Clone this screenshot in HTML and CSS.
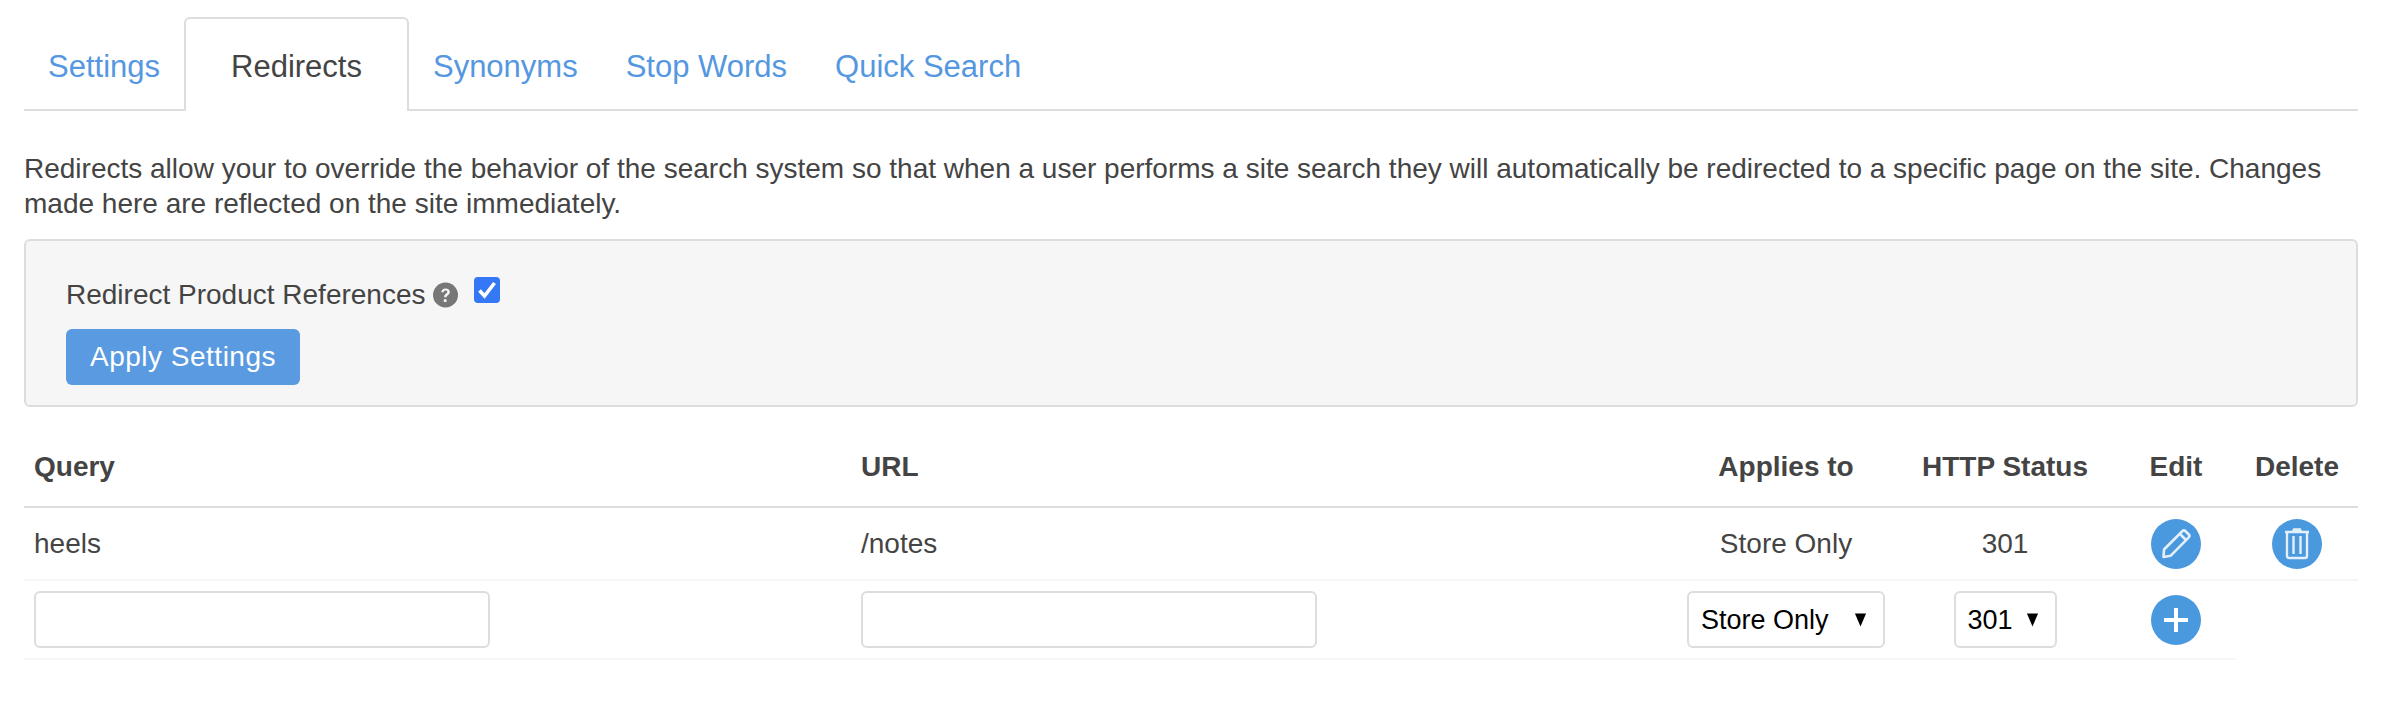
FILE: index.html
```html
<!DOCTYPE html>
<html lang="en">
<head>
    <meta charset="UTF-8">
    <title>Redirects</title>
    <link rel="stylesheet" href="styles.css">
</head>
<body>
    <ul class="tabs">
        <li><a href="#">Settings</a></li>
        <li class="active"><a href="#">Redirects</a></li>
        <li><a href="#">Synonyms</a></li>
        <li><a href="#">Stop Words</a></li>
        <li><a href="#">Quick Search</a></li>
    </ul>
    <p class="intro">Redirects allow your to override the behavior of the search system so that when a user performs a site search they will automatically be redirected to a specific page on the site. Changes made here are reflected on the site immediately.</p>
    <form class="panel">
        <div class="panel-row">
            <label for="refs">Redirect Product References</label>
            <svg class="help" viewBox="0 0 26 26">
                <circle cx="13" cy="13" r="13" fill="#777"/>
                <path d="M8.6 10.2c.2-2.6 2-4 4.500-4 2.600 0 4.400 1.500 4.400 3.700 0 1.600-.9 2.500-2.100 3.300-1 .7-1.300 1.100-1.300 2.100h-2.500c-.1-1.800.5-2.700 1.800-3.600 1-.7 1.500-1.100 1.500-1.800 0-.9-.7-1.500-1.800-1.500-1.200 0-2 .7-2 1.800z" fill="#f6f6f6"/>
                <rect x="11.200" y="17.400" width="2.900" height="2.900" rx=".5" fill="#f6f6f6"/>
            </svg>
            <input type="checkbox" id="refs" class="check" checked>
        </div>
        <button type="button" class="btn">Apply Settings</button>
    </form>
    <table class="grid">
        <colgroup>
            <col class="col-wide"><col class="col-wide"><col class="col-applies"><col class="col-status"><col class="col-edit"><col class="col-delete">
        </colgroup>
        <thead>
            <tr>
                <th>Query</th>
                <th>URL</th>
                <th class="center">Applies to</th>
                <th class="center">HTTP Status</th>
                <th class="center">Edit</th>
                <th class="center">Delete</th>
            </tr>
        </thead>
        <tbody>
            <tr>
                <td>heels</td>
                <td>/notes</td>
                <td class="center">Store Only</td>
                <td class="center">301</td>
                <td class="center">
                    <a class="round" href="#">
                        <svg viewBox="0 0 50 50" fill="none" stroke="#e3effa" stroke-width="2.600">
                            <path d="M13 30.500 31.500 12a2 2 0 0 1 2.800 0l3.500 3.500a2 2 0 0 1 0 2.800L19.500 36.800 12.500 38z" stroke-linejoin="round"/>
                            <path d="M29 15l6.500 6.500"/>
                        </svg>
                    </a>
                </td>
                <td class="center">
                    <a class="round" href="#">
                        <svg viewBox="0 0 50 50" fill="none" stroke="#e3effa" stroke-width="2.400">
                            <path d="M13 13h24M21 13l1-2.500h6l1 2.500"/>
                            <path d="M15 13v24a2 2 0 0 0 2 2h16a2 2 0 0 0 2-2V13"/>
                            <path d="M21.500 17v18M28.500 17v18"/>
                        </svg>
                    </a>
                </td>
            </tr>
            <tr>
                <td><input type="text" class="field"></td>
                <td><input type="text" class="field"></td>
                <td class="center">
                    <select class="pick pick-applies"><option>Store Only</option></select>
                </td>
                <td class="center">
                    <select class="pick pick-status"><option>301</option></select>
                </td>
                <td class="center">
                    <a class="round" href="#">
                        <svg viewBox="0 0 50 50" fill="none" stroke="#fff" stroke-width="4">
                            <path d="M25 13v24M13 25h24"/>
                        </svg>
                    </a>
                </td>
            </tr>
        </tbody>
    </table>
</body>
</html>
```

FILE: styles.css
```css
*{
    box-sizing: border-box;
}
body{
    margin: 0;
    padding: 17px 24px 0;
    background-color: #fff;
    color: #444;
    font-family: "Liberation Sans", Arial, sans-serif;
    font-size: 28px;
    line-height: 35px;
}
a{
    text-decoration: none;
}
.tabs{
    display: flex;
    list-style: none;
    margin: 0;
    padding: 0;
    height: 94px;
    border-bottom: 2px solid #ddd;
}
.tabs li{
    height: 94px;
}
.tabs a{
    display: block;
    padding: 30px 22px 0;
    height: 94px;
    font-size: 31px;
    line-height: 36px;
    color: #5597e0;
    border: 2px solid transparent;
    border-bottom: 0;
    border-radius: 6px 6px 0 0;
}
.tabs .active a{
    padding: 30px 45px 0;
    color: #444;
    background-color: #fff;
    border-color: #ddd;
}
.intro{
    margin: 40px 0 0;
}
.panel{
    margin-top: 18px;
    height: 168px;
    padding: 34px 40px 0;
    background-color: #f6f6f6;
    border: 2px solid #ddd;
    border-radius: 6px;
}
.panel-row{
    display: flex;
    align-items: flex-start;
    height: 54px;
}
.panel-row label{
    line-height: 40px;
}
.help{
    width: 25px;
    height: 26px;
    margin: 7px 0 0 7px;
}
.check{
    appearance: none;
    width: 26px;
    height: 26px;
    margin: 2px 0 0 16px;
    border-radius: 4px;
    background-color: #3478f6;
    background-image: url("data:image/svg+xml,%3Csvg xmlns='http://www.w3.org/2000/svg' viewBox='0 0 26 26'%3E%3Cpath d='M5.500 13.500l5 5.500 10-13' fill='none' stroke='%23fff' stroke-width='3.600'/%3E%3C/svg%3E");
}
.btn{
    display: block;
    width: 234px;
    height: 56px;
    padding: 0;
    border: 0;
    border-radius: 6px;
    background-color: #5a9ae0;
    color: #fff;
    font-family: inherit;
    font-size: 28px;
    letter-spacing: .5px;
}
.grid{
    width: 100%;
    table-layout: fixed;
    border-collapse: collapse;
}
.col-wide{
    width: 827px;
}
.col-applies{
    width: 216px;
}
.col-status{
    width: 222px;
}
.col-edit{
    width: 120px;
}
.col-delete{
    width: 122px;
}
.grid th,.grid td{
    padding: 0 10px;
    text-align: left;
    vertical-align: middle;
}
.grid th{
    height: 100px;
    padding-top: 19px;
    border-bottom: 2px solid #ddd;
    font-weight: bold;
}
.grid td{
    border-bottom: 2px solid #f6f6f6;
}
.grid tbody tr:first-child td{
    height: 73px;
}
.grid tbody tr:last-child td{
    height: 79px;
}
.grid td.center,.grid th.center{
    text-align: center;
    padding-left: 0;
    padding-right: 0;
}
.field{
    display: block;
    width: 456px;
    height: 57px;
    border: 2px solid #ddd;
    border-radius: 6px;
    background-color: #fff;
}
.pick{
    appearance: none;
    height: 57px;
    padding: 0 0 0 12px;
    border: 2px solid #ddd;
    border-radius: 6px;
    color: #000;
    font-family: inherit;
    font-size: 27px;
    background-color: #fff;
    background-image: url("data:image/svg+xml,%3Csvg xmlns='http://www.w3.org/2000/svg' viewBox='0 0 14 14'%3E%3Cpath d='M1 0h12L7 14z' fill='%23000'/%3E%3C/svg%3E");
    background-repeat: no-repeat;
    background-size: 13px 14px;
    background-position: right 16px center;
    vertical-align: middle;
}
.pick-applies{
    width: 198px;
}
.pick-status{
    width: 103px;
}
.round{
    display: inline-block;
    width: 50px;
    height: 50px;
    border-radius: 50%;
    background-color: #4a98de;
    vertical-align: middle;
}
.round svg{
    display: block;
    width: 50px;
    height: 50px;
}
```
